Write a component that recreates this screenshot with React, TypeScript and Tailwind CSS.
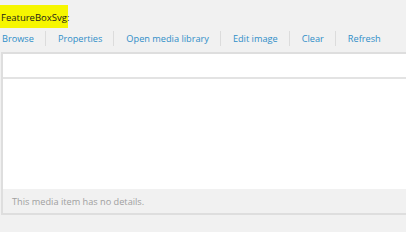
export default function App() {
  const actions = ["Browse", "Properties", "Open media library", "Edit image", "Clear", "Refresh"];

  return (
    <div className="w-[406px] h-[232px] overflow-hidden bg-[#f1f1f1] font-['Open_Sans',sans-serif] text-[9px] whitespace-nowrap">
      <div className="pt-[5px] h-[29px]">
        <span className="inline-block bg-[#f6f600] h-[23px] w-[68px] pl-[1px] pt-[6px] leading-[13px] text-[#1a1a1a] text-[9.5px]">
          FeatureBoxSvg:
        </span>
      </div>

      <div className="flex items-center h-[19px] pl-[2px]">
        {actions.map((a, i) => (
          <div key={a} className="flex items-center">
            {i > 0 && <span className="w-px h-[15px] bg-[#dcdcdc] ml-[11px] mr-[12px]" />}
            <span className="text-[#2f8ec8] leading-[13px] text-[9.2px]">{a}</span>
          </div>
        ))}
      </div>

      <div className="ml-[1px] mt-[4px] w-[430px] border-t-2 border-l-2 border-b-2 border-[#dedede] bg-white">
        <div className="h-[25px] border-b-2 border-[#e3e3e3]" />
        <div className="h-[110px]" />
        <div className="h-[24px] bg-[#f1f1f1] pl-[9px] pt-[6px] text-[#a0a0a0] leading-[13px] text-[9.2px]">
          This media item has no details.
        </div>
      </div>
    </div>
  );
}
